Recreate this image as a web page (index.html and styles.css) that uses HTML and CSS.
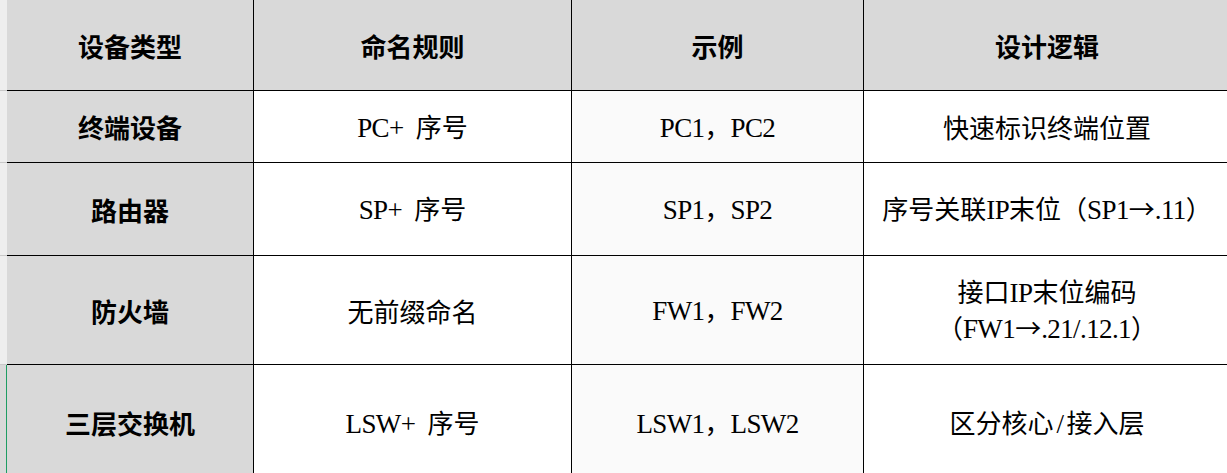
FILE: index.html
```html
<!DOCTYPE html>
<html lang="zh-CN">
<head>
<meta charset="utf-8">
<title>设备命名规则</title>
<link rel="stylesheet" href="styles.css">
</head>
<body>
<div class="sheet">
  <div class="strip"></div>
  <div class="cell head"><div class="txt">设备类型</div></div>
  <div class="cell head"><div class="txt">命名规则</div></div>
  <div class="cell head"><div class="txt">示例</div></div>
  <div class="cell head"><div class="txt">设计逻辑</div></div>

  <div class="strip"></div>
  <div class="cell type"><div class="txt">终端设备</div></div>
  <div class="cell"><div class="txt"><span class="lat">PC+ </span>序号</div></div>
  <div class="cell ex"><div class="txt"><span class="lat">PC1</span>，<span class="lat">PC2</span></div></div>
  <div class="cell"><div class="txt">快速标识终端位置</div></div>

  <div class="strip"></div>
  <div class="cell type"><div class="txt">路由器</div></div>
  <div class="cell"><div class="txt"><span class="lat">SP+ </span>序号</div></div>
  <div class="cell ex"><div class="txt"><span class="lat">SP1</span>，<span class="lat">SP2</span></div></div>
  <div class="cell"><div class="txt">序号关联<span class="lat">IP</span>末位（<span class="lat">SP1</span>→<span class="lat">.11</span>）</div></div>

  <div class="strip"></div>
  <div class="cell type"><div class="txt">防火墙</div></div>
  <div class="cell"><div class="txt">无前缀命名</div></div>
  <div class="cell ex"><div class="txt"><span class="lat">FW1</span>，<span class="lat">FW2</span></div></div>
  <div class="cell"><div class="txt">接口<span class="lat">IP</span>末位编码<br>（<span class="lat">FW1</span>→<span class="lat">.21/.12.1</span>）</div></div>

  <div class="strip sel"></div>
  <div class="cell type"><div class="txt">三层交换机</div></div>
  <div class="cell"><div class="txt"><span class="lat">LSW+ </span>序号</div></div>
  <div class="cell ex"><div class="txt"><span class="lat">LSW1</span>，<span class="lat">LSW2</span></div></div>
  <div class="cell"><div class="txt">区分核心<span class="lat slash">/</span>接入层</div></div>
</div>
</body>
</html>
```

FILE: styles.css
```css
html, body {
  margin: 0;
  padding: 0;
  background: #ffffff;
  overflow: hidden;
}

.sheet {
  display: grid;
  grid-template-columns: 7px 247px 318px 292px 367px;
  grid-template-rows: 91px 72px 93px 109px 116px;
  width: 1231px;
  font-family: "Noto Sans CJK SC", sans-serif;
  font-size: 26px;
  line-height: 33px;
  color: #000;
}

.strip {
  background: #eeeeee;
  box-sizing: border-box;
  border-bottom: 1px solid #c8c8c8;
}

.strip.sel {
  background: #d9d9d9;
  border-right: 1px solid #1f9d63;
  border-bottom: none;
}

.cell {
  box-sizing: border-box;
  border-right: 1px solid #000;
  border-bottom: 1px solid #000;
  display: flex;
  align-items: center;
  justify-content: center;
  background: #ffffff;
}

.txt {
  text-align: center;
  white-space: nowrap;
}

.cell.ex {
  background: #fafafa;
}

.lat {
  font-family: "Liberation Serif", serif;
  font-size: 27px;
  letter-spacing: -0.6px;
  word-spacing: 6px;
  white-space: pre;
}

.lat.slash {
  padding: 0 3px;
}

.cell.head,
.cell.type {
  background: #d9d9d9;
  font-weight: 700;
}
```
